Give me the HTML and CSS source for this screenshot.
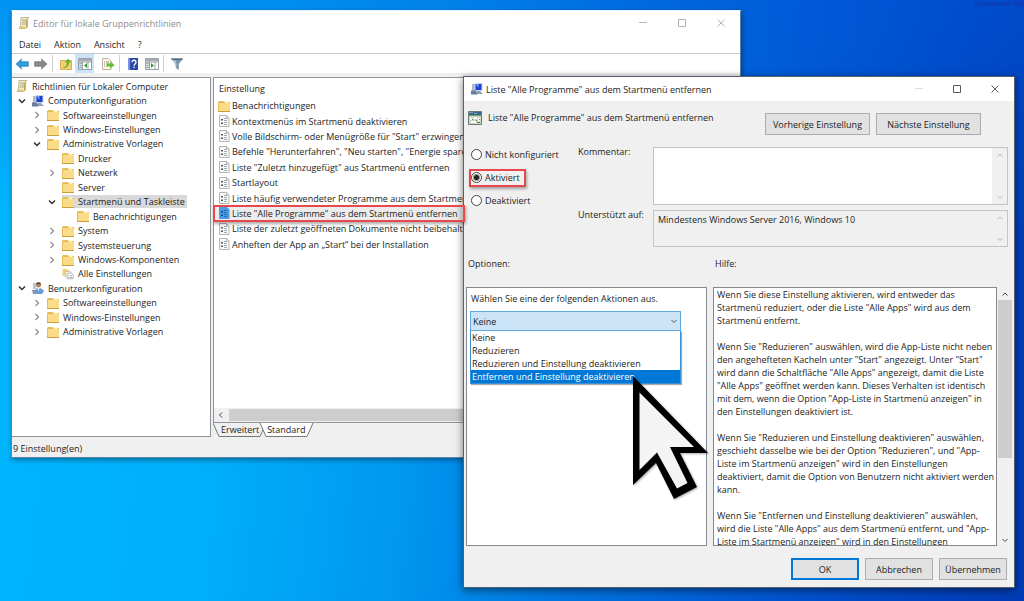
FILE: index.html
```html
<!DOCTYPE html>
<html lang="de">
<head>
<meta charset="utf-8">
<title>Editor für lokale Gruppenrichtlinien</title>
<link rel="stylesheet" href="styles.css">
</head>
<body>
<svg class="sprite" aria-hidden="true">
  <symbol id="folder" viewBox="0 0 12 12"><path d="M0 2 1 1h4.500l1 1H12v9.500H0z" fill="#e6bd5c"/><path d="M1 3h11v8.500H1z" fill="#fadb88"/><path d="M7 1h3.500v2H7z" fill="#fff3c8"/><path d="M0 11.500h12" stroke="#c99f3c"/></symbol>
  <symbol id="scroll" viewBox="0 0 12 12"><path d="M3 .5h8L9.500 2v7.500L8 11.500H1L2.500 9.500z" fill="#f3eed2" stroke="#b0a77c" stroke-width=".8"/><path d="M4 3h4.500M4 5h4.500M3.600 7h4.500" stroke="#9d9878" stroke-width=".8"/><path d="M9.500 1v9L8 11.500V3z" fill="#c6ad52"/><path d="M1 9.500h6v2H1z" fill="#d8c67b"/></symbol>
  <symbol id="computer" viewBox="0 0 12 12"><path d="M1 1h3v8H1z" fill="#a9b7d0"/><path d="M3.500 0h8v8h-8z" fill="#c9d6ee"/><path d="M4.500 1h6v6h-6z" fill="#1b3fcf"/><path d="M4.500 1h3v4z" fill="#6e9cff"/><path d="M6 8h3l3 3H5z" fill="#8fa0bd"/><path d="M0 7.500h5l1.500 4H0z" fill="#6c7d9c"/></symbol>
  <symbol id="user" viewBox="0 0 12 12"><path d="M1 1h3v6H1z" fill="#b8c4d8"/><circle cx="6.500" cy="3" r="2.500" fill="#b78a5b"/><path d="M4 2C4.500-.5 9-.5 9 2.500z" fill="#5d4030"/><path d="M3 9C3 5 10 5 12 9l-2 3H3z" fill="#6b9bda"/><path d="M0 8h4l2 4H1z" fill="#8496b8"/><path d="M5.500 6h2l-1 3z" fill="#fff"/></symbol>
  <symbol id="setting" viewBox="0 0 12 12"><path d="M1.500.5H8.500L11 3v8.500H1.500z" fill="#fafafa" stroke="#b4b4b4"/><path d="M8.500.5V3H11" fill="none" stroke="#a9a9a9" stroke-width=".7"/><path d="M3 4h2v1.500H3zM3 7.500h2V9H3z" fill="#505860"/><path d="M6 3.500h3M6 5.500h3M6 7.500h3M6 9.500h3" stroke="#8c949c" stroke-width=".8"/></symbol>
  <symbol id="setting-on" viewBox="0 0 12 12"><path d="M1 0H9L11.500 2.500V12H1z" fill="#4a9be6"/><path d="M3 4h2v1.500H3zM3 7.500h2V9H3z" fill="#16457c"/><path d="M6 3.500h3M6 5.500h3M6 7.500h3M6 9.500h3" stroke="#24609f" stroke-width=".8"/></symbol>
  <symbol id="allset" viewBox="0 0 14 12"><path d="M.5 1 1.500 0h3l1 1H8v7H.5z" fill="#f2d27a"/><path d="M4 3h6v6H4z" fill="#fff" stroke="#aaa" stroke-width=".7"/><path d="M6 5h5.500l1.500 1.500V11.500H6z" fill="#fff" stroke="#999" stroke-width=".8"/><path d="M7.500 8h1M9.500 8h2M7.500 10h1M9.500 10h2" stroke="#777" stroke-width=".8"/></symbol>
  <symbol id="down" viewBox="0 0 8 8"><path d="m1 2.500 3 3 3-3" fill="none" stroke="currentColor" stroke-width="1.500"/></symbol>
  <symbol id="right" viewBox="0 0 8 8"><path d="m2.500 1 3 3-3 3" fill="none" stroke="currentColor" stroke-width="1.200"/></symbol>
  <symbol id="chevron-down" viewBox="0 0 8 8"><path d="m1.500 3 2.500 2.500L6.500 3" fill="none" stroke="currentColor"/></symbol>
  <symbol id="chevron-up" viewBox="0 0 8 8"><path d="M1.500 5.500 4 3l2.500 2.500" fill="none" stroke="currentColor"/></symbol>
  <symbol id="arrow" viewBox="0 0 14 12"><path d="M.8 6 6.500.8v2.800h7v4.800h-7v2.800z" fill="currentColor" stroke="#0004" stroke-width=".7"/></symbol>
  <symbol id="pane" viewBox="0 0 14 12"><path d="M.5.5h13v11H.5z" fill="#fff" stroke="#9a9ea6"/><path d="M1 1h12v2.300H1z" fill="#a7adb6"/><path d="M1 3.500h3.500V11H1z" fill="#d9dee4"/><path d="M4.500 3.500V11M10 3.500V11M1 4h12" stroke="#8b8f96" stroke-width=".8"/><path d="M1.500 5.500h2M1.500 7.500h2M1.500 9.500h2" stroke="#7c8794" stroke-width=".7"/></symbol>
</svg>

<main class="desktop">
  <span class="watermark">WindowsFAQ</span>

  <section class="window editor" aria-label="Editor für lokale Gruppenrichtlinien">
    <header class="titlebar">
      <svg class="icon"><use href="#scroll"/></svg>
      <h1 class="title">Editor für lokale Gruppenrichtlinien</h1>
      <div class="captions">
        <button class="cap" aria-label="Minimieren"><svg viewBox="0 0 10 10"><path d="M1 4.500h8"/></svg></button>
        <button class="cap" aria-label="Maximieren"><svg viewBox="0 0 10 10"><path d="M1.500 1.500h7v7h-7z"/></svg></button>
        <button class="cap" aria-label="Schließen"><svg viewBox="0 0 10 10"><path d="m1.500 1.500 7 7m0-7-7 7"/></svg></button>
      </div>
    </header>
    <nav class="menubar">
      <button>Datei</button><button>Aktion</button><button>Ansicht</button><button>?</button>
    </nav>
    <div class="toolbar">
      <button class="tool blue" aria-label="Zurück"><svg viewBox="0 0 14 12"><use href="#arrow"/></svg></button>
      <button class="tool gray" aria-label="Vorwärts"><svg class="flip" viewBox="0 0 14 12"><use href="#arrow"/></svg></button>
      <i class="sep"></i>
      <button class="tool" aria-label="Eine Ebene nach oben"><svg viewBox="0 0 14 12"><path d="M1.500 2.500h11v9h-11z" fill="#f3cf6f" stroke="#d8b254"/><path d="M3 10C7 9 8 7 8 4.500H6L9 .5l3 4h-2C10 8 7 10.500 3 10z" fill="#58b62c"/></svg></button>
      <button class="tool on" aria-label="Konsolenstruktur"><svg viewBox="0 0 14 12"><use href="#pane"/><path d="M9 5v5L6 7.500z" fill="#2ca02c"/></svg></button>
      <i class="gap"></i>
      <button class="tool" aria-label="Liste exportieren"><svg viewBox="0 0 14 12"><path d="M1.500.5H7.500L10 3v8.500H1.500z" fill="#fffce6" stroke="#b5b59c"/><path d="M3 4h1M3 6h1M3 8h1M5 4h3M5 6h2M5 8h2" stroke="#707060" stroke-width=".8"/><path d="M6 5.500h3.500V3.500l4 3.500-4 3.500V8.500H6z" fill="#5fc22f"/></svg></button>
      <i class="sep"></i>
      <button class="tool" aria-label="Hilfe"><svg viewBox="0 0 14 12"><path d="M2 0h10v12H2z" fill="#2d48a6"/><path d="M2 0h2v12H2z" fill="#7d92d6"/><path d="M6 4.200c0-2.600 4-2.600 4 0C10 6 8 5.800 8 7.800M8 8.800V10" fill="none" stroke="#fff" stroke-width="1.300"/></svg></button>
      <button class="tool" aria-label="Aktionsbereich"><svg viewBox="0 0 14 12"><use href="#pane"/><path d="M6 5v5l3-2.500z" fill="#2ca02c"/></svg></button>
      <i class="sep"></i>
      <button class="tool" aria-label="Filter"><svg viewBox="0 0 14 12"><path d="M1 .5h12L8.800 6v6L5.800 10V6z" fill="#7d95aa"/><path d="M1 .5h12L12 2H2z" fill="#536b80"/><path d="M3 2.500h2.500l1 3.500v3.500z" fill="#b9cad8"/></svg></button>
    </div>

    <div class="panes">
      <ul class="tree">
        <li class="lv0"><svg class="icon"><use href="#scroll"/></svg><span>Richtlinien für Lokaler Computer</span></li>
        <li class="lv1"><svg class="twist open"><use href="#down"/></svg><svg class="icon"><use href="#computer"/></svg><span>Computerkonfiguration</span></li>
        <li class="lv2"><svg class="twist"><use href="#right"/></svg><svg class="icon"><use href="#folder"/></svg><span>Softwareeinstellungen</span></li>
        <li class="lv2"><svg class="twist"><use href="#right"/></svg><svg class="icon"><use href="#folder"/></svg><span>Windows-Einstellungen</span></li>
        <li class="lv2"><svg class="twist open"><use href="#down"/></svg><svg class="icon"><use href="#folder"/></svg><span>Administrative Vorlagen</span></li>
        <li class="lv3"><i class="twist"></i><svg class="icon"><use href="#folder"/></svg><span>Drucker</span></li>
        <li class="lv3"><svg class="twist"><use href="#right"/></svg><svg class="icon"><use href="#folder"/></svg><span>Netzwerk</span></li>
        <li class="lv3"><i class="twist"></i><svg class="icon"><use href="#folder"/></svg><span>Server</span></li>
        <li class="lv3"><svg class="twist open"><use href="#down"/></svg><span class="picked"><svg class="icon"><use href="#folder"/></svg><span>Startmenü und Taskleiste</span></span></li>
        <li class="lv4"><i class="twist"></i><svg class="icon"><use href="#folder"/></svg><span>Benachrichtigungen</span></li>
        <li class="lv3"><svg class="twist"><use href="#right"/></svg><svg class="icon"><use href="#folder"/></svg><span>System</span></li>
        <li class="lv3"><svg class="twist"><use href="#right"/></svg><svg class="icon"><use href="#folder"/></svg><span>Systemsteuerung</span></li>
        <li class="lv3"><svg class="twist"><use href="#right"/></svg><svg class="icon"><use href="#folder"/></svg><span>Windows-Komponenten</span></li>
        <li class="lv3"><i class="twist"></i><svg class="icon"><use href="#allset"/></svg><span>Alle Einstellungen</span></li>
        <li class="lv1"><svg class="twist open"><use href="#down"/></svg><svg class="icon"><use href="#user"/></svg><span>Benutzerkonfiguration</span></li>
        <li class="lv2"><svg class="twist"><use href="#right"/></svg><svg class="icon"><use href="#folder"/></svg><span>Softwareeinstellungen</span></li>
        <li class="lv2"><svg class="twist"><use href="#right"/></svg><svg class="icon"><use href="#folder"/></svg><span>Windows-Einstellungen</span></li>
        <li class="lv2"><svg class="twist"><use href="#right"/></svg><svg class="icon"><use href="#folder"/></svg><span>Administrative Vorlagen</span></li>
      </ul>

      <div class="content">
        <div class="listing">
          <h2 class="colhead">Einstellung</h2>
          <ul class="items">
            <li><svg class="icon"><use href="#folder"/></svg><span>Benachrichtigungen</span></li>
            <li><svg class="icon"><use href="#setting"/></svg><span>Kontextmenüs im Startmenü deaktivieren</span></li>
            <li><svg class="icon"><use href="#setting"/></svg><span>Volle Bildschirm- oder Menügröße für "Start" erzwingen</span></li>
            <li><svg class="icon"><use href="#setting"/></svg><span>Befehle "Herunterfahren", "Neu starten", "Energie sparen</span></li>
            <li><svg class="icon"><use href="#setting"/></svg><span>Liste "Zuletzt hinzugefügt" aus Startmenü entfernen</span></li>
            <li><svg class="icon"><use href="#setting"/></svg><span>Startlayout</span></li>
            <li><svg class="icon"><use href="#setting"/></svg><span>Liste häufig verwendeter Programme aus dem Startmenü</span></li>
            <li class="current"><svg class="icon"><use href="#setting-on"/></svg><span>Liste "Alle Programme" aus dem Startmenü entfernen</span></li>
            <li><svg class="icon"><use href="#setting"/></svg><span>Liste der zuletzt geöffneten Dokumente nicht beibehalten</span></li>
            <li><svg class="icon"><use href="#setting"/></svg><span>Anheften der App an „Start“ bei der Installation</span></li>
          </ul>
          <div class="hscroll"><svg class="chev" viewBox="0 0 8 8"><path d="M5 1.500 2.500 4 5 6.500" fill="none" stroke="#444"/></svg><i class="hthumb"></i></div>
        </div>
        <div class="tabs">
          <svg class="edge" viewBox="0 0 8 14"><path d="M0 0l6 13.500h2" /></svg>
          <button class="tab">Erweitert</button>
          <svg class="edge" viewBox="0 0 8 14"><path class="lit" d="M1 0l6 14h1V0z"/><path d="M0 13.500h1L4 7M1 0l6 13.500h1"/></svg>
          <button class="tab active">Standard</button>
          <svg class="edge" viewBox="0 0 8 14"><path class="lit" d="M0 0h7L1 14H0z"/><path d="M0 13.500h1L7 0"/></svg>
        </div>
      </div>
    </div>
    <footer class="status">9 Einstellung(en)</footer>
  </section>

  <form class="window dialog" aria-label="Richtlinieneinstellung">
    <header class="titlebar">
      <svg class="icon"><use href="#computer"/></svg>
      <h2 class="title">Liste "Alle Programme" aus dem Startmenü entfernen</h2>
      <div class="captions">
        <button type="button" class="cap faint" aria-label="Minimieren"><svg viewBox="0 0 10 10"><path d="M1 4.500h8"/></svg></button>
        <button type="button" class="cap" aria-label="Maximieren"><svg viewBox="0 0 10 10"><path d="M1.500 1.500h7v7h-7z"/></svg></button>
        <button type="button" class="cap" aria-label="Schließen"><svg viewBox="0 0 10 10"><path d="m1.500 1.500 7 7m0-7-7 7"/></svg></button>
      </div>
    </header>

    <div class="policy">
      <svg class="polimg" viewBox="0 0 14 14"><path d="M.5.5h13v13H.5z" fill="#cfd8c4" stroke="#667a78"/><path d="M1 1h12v3H1z" fill="#386a86"/><path d="M1 1.500h4M6 2.500h3" stroke="#8cb4c4" stroke-width=".8"/><path d="M1 4h12v1H1z" fill="#69a36f"/><path d="M2 7h3v2H2zM6 6h3v2H6zM10 7h2v3h-2zM3 10h5v2H3z" fill="#fff"/><path d="M8 9h1v1H8zM11 8h1v1h-1zM4 8h1v1H4zM9 11h3v1H9z" fill="#5f7f62"/></svg>
      <span class="polname">Liste "Alle Programme" aus dem Startmenü entfernen</span>
      <button type="button" class="btn wide">Vorherige Einstellung</button>
      <button type="button" class="btn wide">Nächste Einstellung</button>
    </div>

    <div class="settings">
      <div class="radios">
        <label><input type="radio" name="state">Nicht konfiguriert</label>
        <label><input type="radio" name="state" checked>Aktiviert</label>
        <label><input type="radio" name="state">Deaktiviert</label>
      </div>
      <label class="caption" for="comment">Kommentar:</label>
      <div class="field tall"><textarea id="comment"></textarea><span class="vscroll dim"><svg class="chev"><use href="#chevron-up"/></svg><svg class="chev"><use href="#chevron-down"/></svg></span></div>
      <label class="caption" for="support">Unterstützt auf:</label>
      <div class="field"><textarea id="support" readonly>Mindestens Windows Server 2016, Windows 10</textarea><span class="vscroll dim"><svg class="chev"><use href="#chevron-up"/></svg><svg class="chev"><use href="#chevron-down"/></svg></span></div>
    </div>

    <div class="details">
      <span class="head">Optionen:</span>
      <label class="head" for="help">Hilfe:</label>
      <div class="options">
        <label class="prompt" for="action">Wählen Sie eine der folgenden Aktionen aus.</label>
        <div class="combo">
          <select id="action"><option>Keine</option><option>Reduzieren</option><option>Reduzieren und Einstellung deaktivieren</option><option>Entfernen und Einstellung deaktivieren</option></select>
          <svg class="chev"><use href="#chevron-down"/></svg>
          <ul class="dropdown" role="listbox">
            <li role="option">Keine</li>
            <li role="option">Reduzieren</li>
            <li role="option">Reduzieren und Einstellung deaktivieren</li>
            <li role="option" class="hover">Entfernen und Einstellung deaktivieren</li>
          </ul>
        </div>
      </div>
      <div class="helpbox">
        <textarea id="help" readonly wrap="off">Wenn Sie diese Einstellung aktivieren, wird entweder das
Startmenü reduziert, oder die Liste "Alle Apps" wird aus dem
Startmenü entfernt.

Wenn Sie "Reduzieren" auswählen, wird die App-Liste nicht neben
den angehefteten Kacheln unter "Start" angezeigt. Unter "Start"
wird dann die Schaltfläche "Alle Apps" angezeigt, damit die Liste
"Alle Apps" geöffnet werden kann. Dieses Verhalten ist identisch
mit dem, wenn die Option "App-Liste in Startmenü anzeigen" in
den Einstellungen deaktiviert ist.

Wenn Sie "Reduzieren und Einstellung deaktivieren" auswählen,
geschieht dasselbe wie bei der Option "Reduzieren", und "App-
Liste im Startmenü anzeigen" wird in den Einstellungen
deaktiviert, damit die Option von Benutzern nicht aktiviert werden
kann.

Wenn Sie "Entfernen und Einstellung deaktivieren" auswählen,
wird die Liste "Alle Apps" aus dem Startmenü entfernt, und "App-
Liste im Startmenü anzeigen" wird in den Einstellungen</textarea>
        <span class="vscroll"><svg class="chev"><use href="#chevron-up"/></svg><i class="vthumb"></i><svg class="chev"><use href="#chevron-down"/></svg></span>
      </div>
    </div>

    <footer class="actions">
      <button type="button" class="btn default">OK</button>
      <button type="button" class="btn">Abbrechen</button>
      <button type="button" class="btn">Übernehmen</button>
    </footer>
  </form>

  <i class="mark mark-row"></i>
  <i class="mark mark-radio"></i>
  <svg class="cursor" viewBox="0 0 80 130"><path d="M1 2 76 79H48L65 113 42 125 24 89 1 111z" fill="#000"/><path d="M7.500 18.500 62 73H38L55.500 109 45 114.500 25 78.500 7.500 96z" fill="#f4f4f4"/></svg>
</main>
</body>
</html>
```
FILE: styles.css
```css
* { box-sizing: border-box; }
body {
  margin: 0;
  font-family: "Open Sans", "Noto Sans", sans-serif;
  font-size: 9px;
  line-height: 13px;
  color: #1c1c1c;
}
button, select, textarea, input { font: inherit; color: inherit; margin: 0; padding: 0; }
button { border: 0; background: none; white-space: nowrap; }
h1, h2, ul { margin: 0; padding: 0; font-size: inherit; font-weight: normal; list-style: none; }
svg { display: block; flex: none; }
i { display: block; flex: none; }
.sprite { position: absolute; width: 0; height: 0; }

.desktop {
  position: relative;
  min-height: 100vh;
  overflow: hidden;
  background:
    linear-gradient(to bottom, #005ae060, #005ae000 35%),
    linear-gradient(97deg, #00b6ff 0%, #00aefa 25%, #0098f0 42%, #0074e0 58%, #0058d2 75%, #0044c0 90%, #003cb4 100%);
}
.watermark {
  position: absolute;
  top: -4px;
  right: 0;
  font-size: 8px;
  color: #1c30a4;
}

.window {
  position: absolute;
  display: flex;
  flex-direction: column;
  background: #f0f0f0;
  white-space: nowrap;
}
.editor { inset: 10px 283px 143px 11px; border: 1px solid #5a87a8; border-top-color: #e8f4fc; box-shadow: 1px 2px 5px #0006; }
.dialog { inset: 76px 9px 13px 463px; border: 1px solid #56606c; box-shadow: 0 2px 8px #0008; }

.titlebar { display: flex; align-items: center; height: 24px; flex: none; background: #fff; }
.editor .titlebar { padding-left: 6px; color: #8e8e8e; }
.dialog .titlebar { padding-left: 7px; }
.icon { width: 12px; height: 12px; }
.title { flex: 1; padding-left: 3px; }
.captions { display: flex; }
.cap { width: 39px; height: 24px; display: grid; place-items: center; }
.dialog .cap { width: 38px; }
.cap svg { width: 10px; height: 10px; fill: none; stroke: #5a5a5a; }
.editor .cap svg { stroke: #b4b4b4; }
.cap.faint svg { stroke: #e2dede; }

.menubar { display: flex; gap: 13px; height: 19px; flex: none; padding: 1px 0 0 7px; background: #fff; border-bottom: 1px solid #c8c8c8; }
.toolbar { display: flex; align-items: center; height: 19px; flex: none; background: #fff; }
.tool { width: 19px; height: 19px; display: grid; place-items: center; }
.tool svg { width: 14px; height: 12px; }
.tool.on { background: #cce4f7; }
.blue { color: #2e9be0; }
.gray { color: #85898d; }
.flip { transform: scaleX(-1); }
.sep { width: 1px; height: 17px; margin: 0 3px 0 2px; background: #d0d0d0; }
.gap { width: 4px; }

.panes { display: flex; gap: 2px; flex: 1; min-height: 0; padding-top: 4px; }
.tree {
  width: 199px;
  display: grid;
  grid-template-rows: repeat(18, 1fr);
  align-content: start;
  padding-top: 1px;
  padding-bottom: 97px;
  background: #fff;
  border: 1px solid #8d949c;
  border-left: 0;
}
.tree li { display: flex; align-items: center; min-height: 0; }
.tree span { padding-left: 4px; }
.twist { width: 8px; height: 8px; margin-right: 6px; color: #8c8c8c; }
.twist.open { color: #303030; }
.lv0 { padding-left: 4px; }
.lv1 { padding-left: 6px; }
.lv2 { padding-left: 21px; }
.lv3 { padding-left: 36px; }
.lv4 { padding-left: 51px; }
.tree .picked { display: flex; align-items: center; padding: 0 2px 0 0; background: #d9d9d9; }

.content { flex: 1; display: flex; flex-direction: column; min-width: 0; }
.listing { flex: 1; display: flex; flex-direction: column; min-height: 0; background: #fff; border: 1px solid #8d949c; }
.colhead { height: 20px; padding: 4px 0 0 5px; }
.items { display: grid; grid-template-rows: repeat(10, 1fr); height: 154px; }
.items li { display: flex; align-items: center; gap: 2px; padding-left: 4px; }
.current { margin-right: 277px; background: #ececec; }
.hscroll { display: flex; align-items: center; height: 14px; margin-top: auto; background: #f0f0f0; }
.chev { width: 8px; height: 8px; }
.hscroll .chev { margin: 0 4px 0 3px; }
.hthumb { flex: 1; height: 12px; background: #cdcdcd; }
.tabs { display: flex; height: 14px; flex: none; }
.tab { height: 14px; border-bottom: 1px solid #777; }
.tab.active, .lit { background: #fff; fill: #fff; }
.edge { width: 8px; height: 14px; fill: none; stroke: #777; }
.lit { stroke: none; }
.status { height: 20px; flex: none; padding: 5px 1px 0; }

.policy { display: flex; align-items: flex-start; gap: 6px; flex: none; padding: 10px 33px 12px 4px; }
.polimg { width: 14px; height: 14px; }
.polname { flex: 1; }
.btn { width: 68px; height: 22px; background: #e1e1e1; border: 1px solid #adadad; }
.policy .btn { width: 105px; margin-top: 2px; }
.btn.default { border: 2px solid #0078d7; }

.settings {
  display: grid;
  grid-template-columns: 107px 75px 1fr;
  grid-template-rows: 58px 37px;
  row-gap: 5px;
  padding: 0 6px 0 7px;
}
.caption { line-height: 10px; }
.radios { grid-row: 1 / 3; display: flex; flex-direction: column; gap: 10px; padding-top: 1px; }
.radios label { display: flex; align-items: center; gap: 3px; height: 13px; }
.radios input { appearance: none; width: 11px; height: 11px; border: 1px solid #444; border-radius: 50%; background: #fff; }
.radios input:checked { background: radial-gradient(circle, #222 0 2px, #fff 4px); }
.field { display: flex; border: 1px solid #c4c4c4; background: #f0f0f0; }
.field textarea { flex: 1; min-width: 0; border: 0; outline: 0; resize: none; overflow: hidden; background: none; padding: 2px 4px; }
.tall textarea { background: #fff; }
.vscroll { width: 15px; display: flex; flex-direction: column; align-items: center; justify-content: space-between; padding: 3px 0; color: #444; }
.dim { color: #b4b4b4; }

.details {
  flex: 1;
  min-height: 0;
  display: grid;
  grid-template-columns: 241px 1fr;
  grid-template-rows: 40px 1fr;
  column-gap: 6px;
  padding: 0 2px;
}
.head { padding: 10px 0 0 2px; }
.options { background: #fff; border: 1px solid #828790; padding: 4px 3px; }
.prompt { display: block; height: 19px; padding-left: 1px; }
.combo { position: relative; width: 211px; }
.combo select { appearance: none; width: 100%; height: 20px; padding-left: 2px; background: #cce4f7; border: 1px solid #5fa8e0; border-radius: 0; }
.combo .chev { position: absolute; right: 3px; top: 6px; color: #555; }
.dropdown { position: absolute; top: 20px; left: 0; right: 0; background: #fff; border: 1px solid #3c8fd6; border-top: 0; box-shadow: 1px 1px 1px #0005; }
.dropdown li { padding-left: 1px; }
.dropdown .hover { background: #0078d7; color: #fff; }
.helpbox { display: flex; min-height: 0; }
.helpbox textarea { flex: 1; min-width: 0; border: 1px solid #828790; outline: 0; resize: none; overflow: hidden; padding: 0 3px; background: #fff; }
.helpbox .vscroll { padding: 3px 0 2px; }
.vthumb { width: 14px; height: 158px; margin: 2px 0 auto; background: #cdcdcd; }

.actions { display: flex; justify-content: flex-end; gap: 6px; flex: none; padding: 12px 7px 7px; }

.mark { position: absolute; border: 2px solid #e8474b; box-shadow: 1px 2px 3px #0005; }
.mark-row { left: 213px; top: 205px; width: 252px; height: 17px; }
.mark-radio { left: 469px; top: 169px; width: 57px; height: 18px; }
.cursor { position: absolute; left: 632px; top: 374px; width: 80px; height: 130px; filter: drop-shadow(1px 1px 1px #0005); }
```
